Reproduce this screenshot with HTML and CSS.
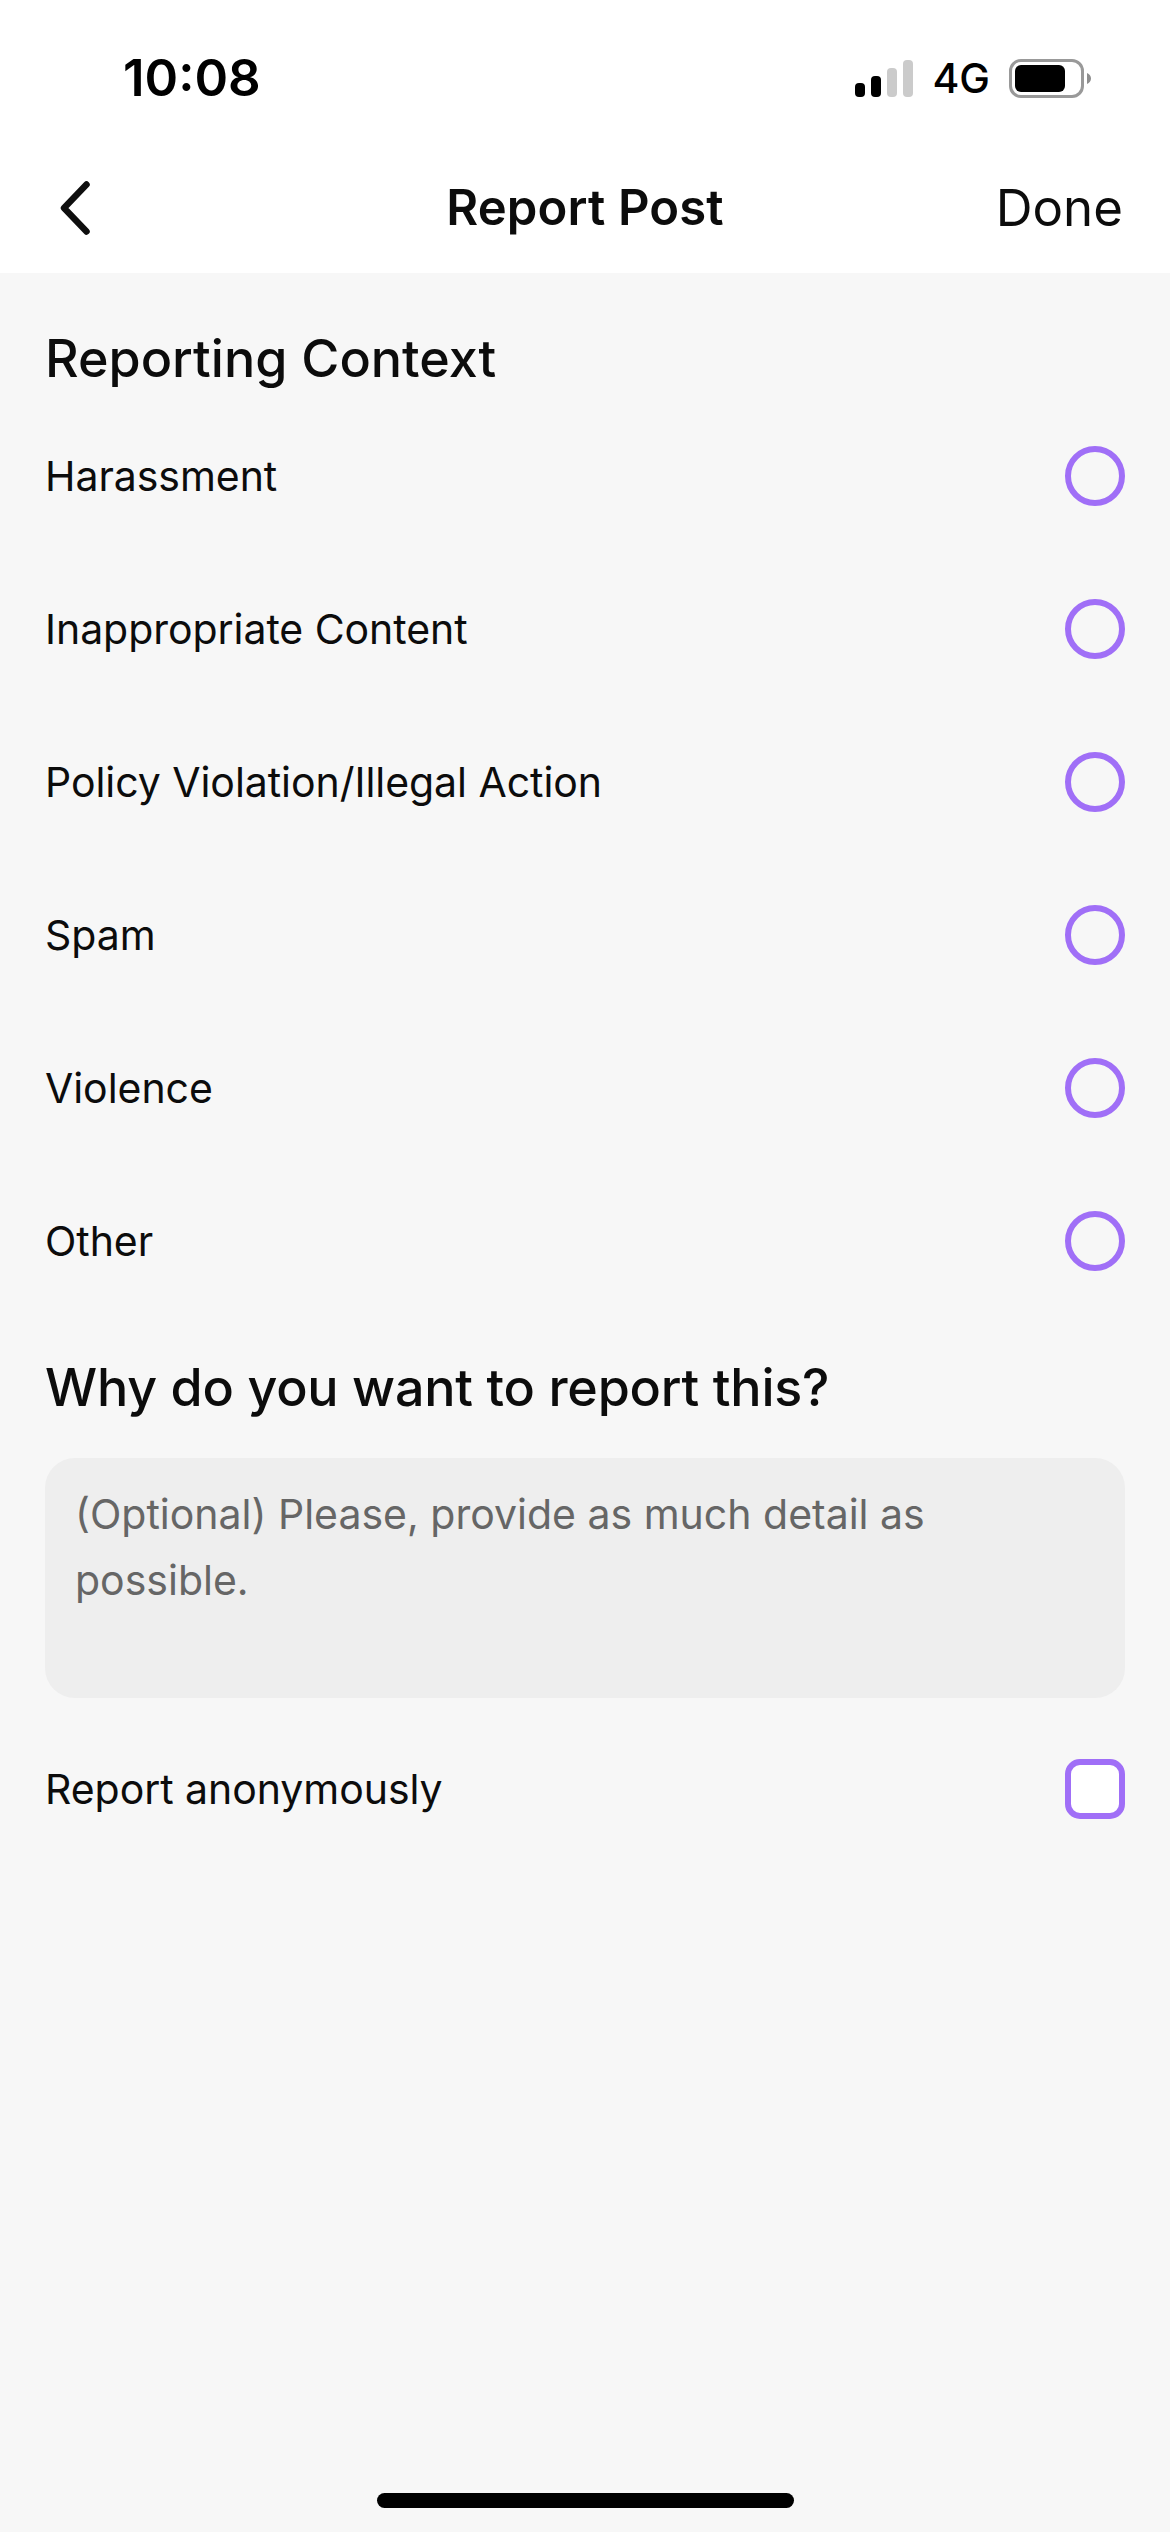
FILE: index.html
```html
<!DOCTYPE html>
<html lang="en">
<head>
<meta charset="utf-8">
<title>Report Post</title>
<link rel="stylesheet" href="styles.css">
</head>
<body>
<div class="app">
  <header class="top">
    <div class="status">
      <span class="time">10:08</span>
      <div class="status-right">
        <svg class="signal" width="58" height="37" viewBox="0 0 58 37"><rect x="0" y="23" width="10" height="14" rx="4" fill="#000"/><rect x="16" y="16" width="10" height="21" rx="4" fill="#000"/><rect x="32" y="8" width="10" height="29" rx="4" fill="#cbcbcb"/><rect x="48" y="0" width="10" height="37" rx="4" fill="#cbcbcb"/></svg>
        <span class="net">4G</span>
        <svg class="battery" width="82" height="39" viewBox="0 0 82 39"><rect x="1.500" y="1.500" width="72" height="36" rx="10.500" fill="none" stroke="#999" stroke-width="3"/><rect x="6" y="6" width="50" height="27" rx="6" fill="#000"/><path d="M78 14c2.500 1 4 3 4 5.500s-1.500 4.500-4 5.500z" fill="#8e8e8e"/></svg>
      </div>
    </div>
    <nav class="nav">
      <svg class="back" width="30" height="54" viewBox="0 0 30 54"><path d="M26.500 3.500 L4 27 L26.500 50.500" fill="none" stroke="#0e0e0e" stroke-width="6.500" stroke-linecap="round" stroke-linejoin="round"/></svg>
      <h1 class="title">Report Post</h1>
      <span class="done">Done</span>
    </nav>
  </header>
  <main class="content">
    <h2 class="heading">Reporting Context</h2>
    <ul class="options">
      <li class="row"><span>Harassment</span><i class="radio"></i></li>
      <li class="row"><span>Inappropriate Content</span><i class="radio"></i></li>
      <li class="row"><span>Policy Violation/Illegal Action</span><i class="radio"></i></li>
      <li class="row"><span>Spam</span><i class="radio"></i></li>
      <li class="row"><span>Violence</span><i class="radio"></i></li>
      <li class="row"><span>Other</span><i class="radio"></i></li>
    </ul>
    <h2 class="heading why">Why do you want to report this?</h2>
    <div class="input">(Optional) Please, provide as much detail as possible.</div>
    <div class="row anon"><span>Report anonymously</span><i class="check"></i></div>
  </main>
  <div class="home-wrap"><div class="home"></div></div>
</div>
</body>
</html>
```
FILE: styles.css
```css
* { box-sizing: border-box; }
html, body { margin: 0; padding: 0; }
body { font-family: Inter, "Liberation Sans", sans-serif; color: #0c0c0c; background: #f7f7f7; }
.app { width: 1170px; height: 2532px; display: flex; flex-direction: column; background: #f7f7f7; overflow: hidden; }
.top { height: 273px; background: #fff; flex: none; }
.status { height: 146px; padding: 50px 79px 0 123px; display: flex; justify-content: space-between; align-items: flex-start; }
.time { font-size: 51px; line-height: 56px; font-weight: 600; color: #000; }
.status-right { display: flex; align-items: center; gap: 19px; height: 56px; }
.net { font-size: 41px; line-height: 40px; font-weight: 500; color: #000; }
.nav { height: 127px; padding: 0 47px 4px 60px; display: flex; align-items: center; justify-content: space-between; position: relative; }
.title { position: absolute; left: 0; right: 0; margin: 0; text-align: center; font-size: 49px; font-weight: 600; line-height: 60px; letter-spacing: 0.15px; }
.done { font-size: 51px; line-height: 60px; }
.content { flex: 1; padding: 56px 45px 0 45px; }
.heading { margin: 0; font-size: 52px; line-height: 60px; font-weight: 500; }
.options { list-style: none; margin: 10px 0 0; padding: 0; }
.row { display: flex; justify-content: space-between; align-items: center; font-size: 41px; letter-spacing: -0.05px; height: 153px; }
.radio { width: 60px; height: 60px; border: 6px solid #a06ff7; border-radius: 50%; }
.check { width: 60px; height: 60px; border: 6px solid #a06ff7; border-radius: 15px; background: #fff; }
.why { margin-top: 41px; letter-spacing: -0.2px; }
.input { margin-top: 40px; height: 240px; background: #eeeeee; border-radius: 30px; padding: 23px 30px; font-size: 41px; line-height: 66px; color: #666; }
.anon { height: 181px; }
.home-wrap { height: 39px; flex: none; display: flex; justify-content: center; }
.home { width: 417px; height: 15px; border-radius: 8px; background: #000; }
```
